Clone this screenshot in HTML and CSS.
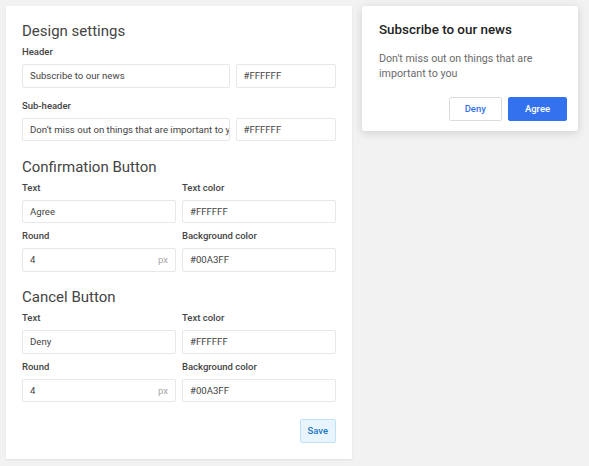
FILE: index.html
```html
<!DOCTYPE html>
<html lang="en">
<head>
<meta charset="utf-8">
<title>Design settings</title>
<link rel="stylesheet" href="styles.css">
</head>
<body>
<div class="page">
  <div class="card settings">
    <section class="group">
      <h2 class="group-title">Design settings</h2>
      <div class="grid grid-wide">
        <label class="label span-2">Header</label>
        <div class="input">Subscribe to our news</div>
        <div class="input">#FFFFFF</div>
        <label class="label span-2 label-spaced">Sub-header</label>
        <div class="input clip">Don’t miss out on things that are important to you</div>
        <div class="input">#FFFFFF</div>
      </div>
    </section>

    <section class="group group-next">
      <h2 class="group-title">Confirmation Button</h2>
      <div class="grid grid-half">
        <div class="field"><label class="label">Text</label><div class="input">Agree</div></div>
        <div class="field"><label class="label">Text color</label><div class="input">#FFFFFF</div></div>
        <div class="field"><label class="label">Round</label><div class="input input-unit"><span>4</span><span class="unit">px</span></div></div>
        <div class="field"><label class="label">Background color</label><div class="input">#00A3FF</div></div>
      </div>
    </section>

    <section class="group group-next">
      <h2 class="group-title">Cancel Button</h2>
      <div class="grid grid-half">
        <div class="field"><label class="label">Text</label><div class="input">Deny</div></div>
        <div class="field"><label class="label">Text color</label><div class="input">#FFFFFF</div></div>
        <div class="field"><label class="label">Round</label><div class="input input-unit"><span>4</span><span class="unit">px</span></div></div>
        <div class="field"><label class="label">Background color</label><div class="input">#00A3FF</div></div>
      </div>
    </section>

    <div class="actions">
      <button class="btn-save">Save</button>
    </div>
  </div>

  <div class="card popup">
    <div class="popup-body">
      <h3 class="popup-title">Subscribe to our news</h3>
      <p class="popup-text">Don't miss out on things that are important to you</p>
    </div>
    <div class="popup-actions">
      <button class="btn btn-deny">Deny</button>
      <button class="btn btn-agree">Agree</button>
    </div>
  </div>
</div>
</body>
</html>
```

FILE: styles.css
```css
* { box-sizing: border-box; }

html, body {
  margin: 0;
  padding: 0;
}

body {
  background: #f2f2f2;
  font-family: Roboto, "Liberation Sans", Arial, sans-serif;
  color: #333;
}

.page {
  display: flex;
  align-items: flex-start;
  gap: 10px;
  padding: 6px;
}

.card {
  background: #fff;
}

.settings {
  width: 346px;
  padding: 16px 16px 16px;
  box-shadow: 0 1px 2px rgba(0, 0, 0, 0.08);
}

.group-title {
  margin: 0 0 5px;
  font-size: 15px;
  line-height: 18px;
  font-weight: 400;
  color: #444;
}

.group-next { margin-top: 16.5px; }

.grid {
  display: grid;
  column-gap: 6px;
}

.grid-wide { grid-template-columns: 1fr 100.5px; }
.grid-half { grid-template-columns: 1fr 1fr; row-gap: 6px; }

.span-2 { grid-column: span 2; }

.label {
  display: block;
  font-size: 9.5px;
  line-height: 13px;
  font-weight: 500;
  color: #444;
  margin-bottom: 6px;
}

.label-spaced { margin-top: 11px; }

.input {
  height: 23.5px;
  border: 1px solid #e8e8e8;
  border-radius: 2px;
  padding: 0 7px;
  font-size: 9.6px;
  color: #444;
  display: flex;
  align-items: center;
  white-space: nowrap;
  overflow: hidden;
}

.input-unit { justify-content: space-between; }

.unit { color: #aaa; }

.actions {
  display: flex;
  justify-content: flex-end;
  margin-top: 17px;
}

.btn-save {
  width: 36.5px;
  height: 23.5px;
  border: 1px solid #bfe2fb;
  border-radius: 2px;
  background: #e8f5ff;
  color: #1d78c1;
  font-family: inherit;
  font-size: 9.5px;
  font-weight: 500;
  padding: 0;
}

.popup {
  width: 216px;
  border-radius: 3px;
  box-shadow: 0 2px 10px rgba(0, 0, 0, 0.14);
}

.popup-body {
  padding: 16px 17px 0;
}

.popup-title {
  margin: 0;
  font-size: 13.4px;
  line-height: 16px;
  font-weight: 500;
  color: #222;
}

.popup-text {
  margin: 13px 0 0;
  font-size: 10.7px;
  line-height: 15px;
  color: #6b6b6b;
}

.popup-actions {
  display: flex;
  justify-content: flex-end;
  gap: 6px;
  padding: 16px 11px 10.5px;
}

.btn {
  height: 23.5px;
  border-radius: 2px;
  font-family: inherit;
  font-size: 9.5px;
  font-weight: 500;
  padding: 0;
}

.btn-deny {
  width: 53.5px;
  background: #fff;
  border: 1px solid #dcdcdc;
  color: #3471ee;
}

.btn-agree {
  width: 59px;
  background: #3471ee;
  border: 1px solid #3471ee;
  color: #fff;
}
```
